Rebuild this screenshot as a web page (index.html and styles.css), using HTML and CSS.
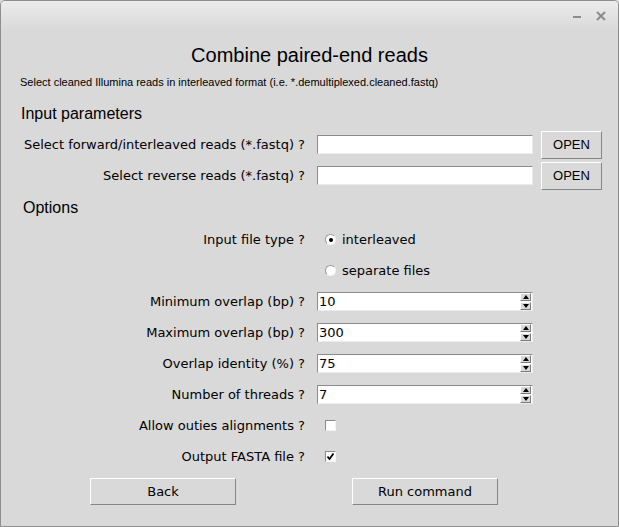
FILE: index.html
```html
<!DOCTYPE html>
<html>
<head>
<meta charset="utf-8">
<link rel="stylesheet" href="styles.css">
</head>
<body>
<div class="window">
  <div class="titlebar">
    <span class="tb-btn tb-min"></span>
    <span class="tb-btn tb-close">
      <svg width="10" height="10" viewBox="0 0 10 10"><path d="M1 1 L9 9 M9 1 L1 9" stroke="#8c8c8c" stroke-width="2"/></svg>
    </span>
  </div>
  <div class="content">
    <h1 class="title">Combine paired-end reads</h1>
    <p class="subtitle">Select cleaned Illumina reads in interleaved format (i.e. *.demultiplexed.cleaned.fastq)</p>
    <h2 class="section sec-input">Input parameters</h2>
    <div class="inputs">
      <div class="row">
        <span class="lbl">Select forward/interleaved reads (*.fastq) ?</span>
        <span class="entry"></span>
        <button class="btn btn-open">OPEN</button>
      </div>
      <div class="row">
        <span class="lbl">Select reverse reads (*.fastq) ?</span>
        <span class="entry"></span>
        <button class="btn btn-open">OPEN</button>
      </div>
    </div>
    <h2 class="section sec-options">Options</h2>
    <div class="opts">
      <div class="row">
        <span class="lbl">Input file type ?</span>
        <span class="choice"><span class="radio on"></span>interleaved</span>
      </div>
      <div class="row">
        <span class="lbl"></span>
        <span class="choice"><span class="radio"></span>separate files</span>
      </div>
      <div class="row">
        <span class="lbl">Minimum overlap (bp) ?</span>
        <span class="entry spin">10<span class="arrows"><span class="arr up"></span><span class="arr down"></span></span></span>
      </div>
      <div class="row">
        <span class="lbl">Maximum overlap (bp) ?</span>
        <span class="entry spin">300<span class="arrows"><span class="arr up"></span><span class="arr down"></span></span></span>
      </div>
      <div class="row">
        <span class="lbl">Overlap identity (%) ?</span>
        <span class="entry spin">75<span class="arrows"><span class="arr up"></span><span class="arr down"></span></span></span>
      </div>
      <div class="row">
        <span class="lbl">Number of threads ?</span>
        <span class="entry spin">7<span class="arrows"><span class="arr up"></span><span class="arr down"></span></span></span>
      </div>
      <div class="row">
        <span class="lbl">Allow outies alignments ?</span>
        <span class="choice"><span class="check"></span></span>
      </div>
      <div class="row">
        <span class="lbl">Output FASTA file ?</span>
        <span class="choice"><span class="check on"><svg width="9" height="9" viewBox="0 0 9 9"><path d="M1.5 4.5 L3.5 7 L7.5 1.5" fill="none" stroke="#000" stroke-width="1.8"/></svg></span></span>
      </div>
    </div>
    <div class="actions">
      <button class="btn btn-wide">Back</button>
      <button class="btn btn-wide">Run command</button>
    </div>
  </div>
</div>
</body>
</html>
```

FILE: styles.css
```css
html, body {
  margin: 0;
  padding: 0;
  background: #d9d9d9;
}
.window {
  box-sizing: border-box;
  width: 619px;
  height: 527px;
  border: 1px solid #8e8e8e;
  border-radius: 5px 5px 0 0;
  background: #d9d9d9;
  font-family: "DejaVu Sans", sans-serif;
  color: #000;
  overflow: hidden;
}
.titlebar {
  height: 29px;
  background: linear-gradient(#ececec, #d9d9d9);
  display: flex;
  justify-content: flex-end;
  align-items: center;
  padding-right: 12px;
  gap: 14px;
}
.tb-btn {
  display: flex;
  align-items: center;
  justify-content: center;
  width: 10px;
  height: 10px;
}
.tb-min::before {
  content: "";
  width: 8px;
  height: 2px;
  background: #8c8c8c;
  margin-top: 3px;
}
.content {
  padding: 0 0 0 19px;
}
.title {
  margin: 12px 0 0 0;
  font-family: "Liberation Sans", Arial, sans-serif;
  font-size: 20px;
  font-weight: normal;
  line-height: 26px;
  text-align: center;
  padding-right: 19px;
}
.subtitle {
  margin: 7px 0 0 0;
  font-family: "Liberation Sans", Arial, sans-serif;
  font-size: 11px;
  line-height: 14px;
}
.section {
  margin: 0;
  font-family: "Liberation Sans", Arial, sans-serif;
  font-size: 16px;
  font-weight: normal;
  line-height: 20px;
  padding-left: 1px;
}
.sec-input { margin-top: 15px; }
.inputs { margin-top: 5px; }
.sec-options { margin-top: 7px; padding-left: 3px; }
.opts { margin-top: 6px; }
.row {
  display: flex;
  align-items: center;
  height: 31px;
}
.lbl {
  box-sizing: border-box;
  width: 285px;
  text-align: right;
  font-size: 13px;
  margin-right: 12px;
  white-space: nowrap;
}
.entry {
  box-sizing: border-box;
  width: 216px;
  height: 19px;
  background: #fff;
  border-top: 1px solid #8b8b8b;
  border-left: 1px solid #8b8b8b;
  border-bottom: 1px solid #ececec;
  border-right: 1px solid #ececec;
  font-size: 13px;
  line-height: 17px;
  padding-left: 1px;
  display: flex;
  align-items: center;
}
.spin { justify-content: space-between; }
.arrows {
  display: flex;
  flex-direction: column;
  gap: 1px;
  margin-right: 1px;
}
.arr {
  box-sizing: border-box;
  width: 11px;
  height: 8px;
  background: #d9d9d9;
  border-top: 1px solid #fff;
  border-left: 1px solid #fff;
  border-bottom: 1px solid #7a7a7a;
  border-right: 1px solid #7a7a7a;
  display: flex;
  align-items: center;
  justify-content: center;
}
.arr::before {
  content: "";
  width: 0;
  height: 0;
  border-left: 3.5px solid transparent;
  border-right: 3.5px solid transparent;
}
.up::before { border-bottom: 4px solid #000; }
.down::before { border-top: 4px solid #000; }
.btn {
  box-sizing: border-box;
  background: #d9d9d9;
  border-top: 1px solid #fff;
  border-left: 1px solid #fff;
  border-bottom: 1px solid #858585;
  border-right: 1px solid #858585;
  border-radius: 0;
  padding: 0;
  color: #000;
}
.btn-open {
  width: 61px;
  height: 28px;
  margin-left: 8px;
  font-family: "Liberation Sans", Arial, sans-serif;
  font-size: 13px;
}
.choice {
  display: flex;
  align-items: center;
  font-size: 13px;
  padding-left: 8px;
}
.radio {
  box-sizing: border-box;
  width: 11px;
  height: 11px;
  border-radius: 50%;
  background: #fff;
  border-top: 1px solid #9a9a9a;
  border-left: 1px solid #9a9a9a;
  border-bottom: 1px solid #f4f4f4;
  border-right: 1px solid #f4f4f4;
  margin-right: 6px;
  display: flex;
  align-items: center;
  justify-content: center;
}
.radio.on::before {
  content: "";
  width: 4px;
  height: 4px;
  border-radius: 50%;
  background: #000;
}
.check {
  box-sizing: border-box;
  width: 11px;
  height: 11px;
  background: #fff;
  border-top: 1px solid #8b8b8b;
  border-left: 1px solid #8b8b8b;
  border-bottom: 1px solid #f4f4f4;
  border-right: 1px solid #f4f4f4;
  display: flex;
  align-items: center;
  justify-content: center;
}
.actions {
  display: flex;
  margin-top: 6px;
  padding-left: 70px;
  gap: 116px;
}
.btn-wide {
  width: 146px;
  height: 27px;
  font-family: "DejaVu Sans", sans-serif;
  font-size: 13px;
}
```
